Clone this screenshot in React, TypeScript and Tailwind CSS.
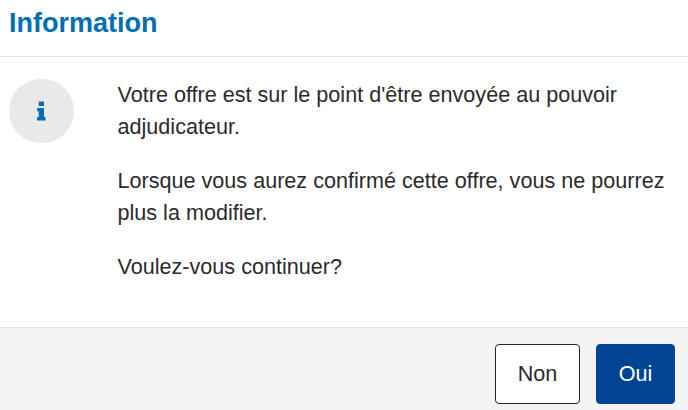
import React from 'react';

const InfoIcon = () => (
  <svg width="9" height="20" viewBox="0 0 9 20" fill="#006fb4" aria-hidden="true">
    <rect x="1.7" y="0.5" width="5.3" height="4.5" rx="0.5" />
    <path d="M0.5 7H6.5Q7 7 7 7.5V16H8Q8.6 16 8.6 16.6V18.9Q8.6 19.5 8 19.5H0.5Q0 19.5 0 18.9V16.6Q0 16 0.5 16H1.7V10.3H0.5Q0 10.3 0 9.7V7.6Q0 7 0.5 7Z" />
  </svg>
);

const App = () => {
  const buttonStyles = 'h-[60px] rounded border text-[21.6px] leading-none';
  return (
    <div
      className="flex h-[410px] w-[688px] flex-col overflow-hidden bg-white text-[#2b2b2b] font-['Liberation_Sans',Arial,sans-serif]"
      role="dialog"
      aria-labelledby="dialog-title"
    >
      <header className="h-[57px] border-b border-[#e5e5e5] pl-[9px] pt-[7px]">
        <h1 id="dialog-title" className="text-[27px] leading-[32px] font-bold text-[#006fb4]">
          Information
        </h1>
      </header>
      <main className="flex h-[270px] gap-[43.5px] pl-[9px] pt-[22px]">
        <div className="flex h-[64px] w-[65px] shrink-0 items-center justify-center rounded-full bg-[#e9e9e9] pr-px">
          <InfoIcon />
        </div>
        <div className="space-y-[22px] text-[21.6px] leading-[32px]">
          <p>
            Votre offre est sur le point d'être envoyée au pouvoir
            <br />
            adjudicateur.
          </p>
          <p>
            Lorsque vous aurez confirmé cette offre, vous ne pourrez
            <br />
            plus la modifier.
          </p>
          <p>Voulez-vous continuer?</p>
        </div>
      </main>
      <footer className="flex grow justify-end gap-4 border-t border-[#e5e5e5] bg-[#f4f4f4] pr-[13px] pt-4">
        <button className={`${buttonStyles} w-[85px] border-[#262626] bg-white`}>Non</button>
        <button className={`${buttonStyles} w-[79px] border-[#004494] bg-[#004494] text-white`}>Oui</button>
      </footer>
    </div>
  );
};

export default App;
